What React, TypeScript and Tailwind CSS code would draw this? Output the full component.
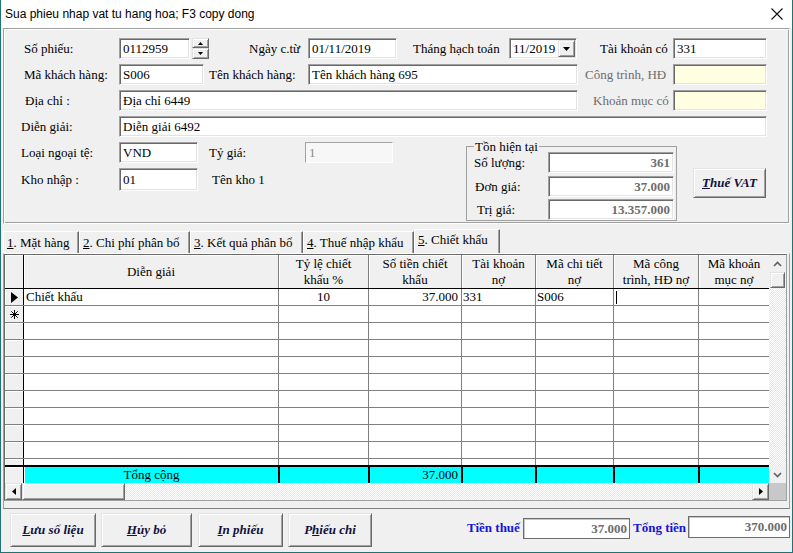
import React from "react";

const SUNKEN =
  "border border-t-[#a0a0a0] border-l-[#a0a0a0] border-b-white border-r-white shadow-[inset_1px_1px_0_#696969,inset_-1px_-1px_0_#e3e3e3]";
const RAISED =
  "border border-t-[#e3e3e3] border-l-[#e3e3e3] border-b-[#696969] border-r-[#696969] shadow-[inset_1px_1px_0_#ffffff,inset_-1px_-1px_0_#a0a0a0]";
const DITHER =
  "bg-[image:repeating-conic-gradient(#e6e6e6_0_25%,#ffffff_0_50%)] bg-[length:2px_2px]";

function Box({ className, children }: { className: string; children?: React.ReactNode }) {
  return (
    <div className={`${SUNKEN} flex items-center px-[3px] whitespace-nowrap overflow-hidden shrink-0 ${className}`}>
      {children}
    </div>
  );
}

const TriUp = () => (
  <svg width="5" height="3" viewBox="0 0 5 3">
    <path d="M2.5 0L5 3H0z" fill="#000" />
  </svg>
);
const TriDown = ({ w = 5, h = 3 }: { w?: number; h?: number }) => (
  <svg width={w} height={h} viewBox={`0 0 ${w} ${h}`}>
    <path d={`M0 0H${w}L${w / 2} ${h}z`} fill="#000" />
  </svg>
);
const TriLeft = () => (
  <svg width="4" height="7" viewBox="0 0 4 7">
    <path d="M4 0V7L0 3.5z" fill="#000" />
  </svg>
);
const TriRight = () => (
  <svg width="4" height="7" viewBox="0 0 4 7">
    <path d="M0 0V7L4 3.5z" fill="#000" />
  </svg>
);
const ChevUp = () => (
  <svg width="9" height="6" viewBox="0 0 9 6">
    <path d="M1 5L4.5 1.5L8 5" stroke="#606060" strokeWidth="1.6" fill="none" />
  </svg>
);
const ChevDown = () => (
  <svg width="9" height="6" viewBox="0 0 9 6">
    <path d="M1 1L4.5 4.5L8 1" stroke="#606060" strokeWidth="1.6" fill="none" />
  </svg>
);

const COLS: { w: string; t: string[]; tw: string }[] = [
  { w: "w-[255px] border-r", tw: "w-[255px] border-r-2", t: ["Diễn giải"] },
  { w: "w-[90px] border-r", tw: "w-[90px] border-r-2", t: ["Tỷ lệ chiết", "khấu %"] },
  { w: "w-[93px] border-r", tw: "w-[93px] border-r-2", t: ["Số tiền chiết", "khấu"] },
  { w: "w-[74px] border-r", tw: "w-[74px] border-r-2", t: ["Tài khoản", "nợ"] },
  { w: "w-[78px] border-r", tw: "w-[78px] border-r-2", t: ["Mã chi tiết", "nợ"] },
  { w: "w-[85px] border-r", tw: "w-[85px] border-r-2", t: ["Mã công", "trình, HĐ nợ"] },
  { w: "w-[70px]", tw: "w-[70px]", t: ["Mã khoản", "mục nợ"] },
];

function Tab({ w, num, rest, active }: { w: string; num: string; rest: string; active?: boolean }) {
  return (
    <div
      className={`${w} ${
        active ? "h-[24px] relative z-10 pb-[3px]" : "h-[22px]"
      } shrink-0 flex items-center pl-[3px] bg-[#f0f0f0] border-t border-l border-r border-t-white border-l-white border-r-[#696969] shadow-[inset_-1px_0_0_#a0a0a0] whitespace-nowrap`}
    >
      <span className="underline">{num}</span>
      <span>{rest}</span>
    </div>
  );
}

function RowHdr({ children }: { children?: React.ReactNode }) {
  return (
    <div className="w-[19px] shrink-0 h-full bg-[#f0f0f0] border-r border-r-black shadow-[inset_1px_1px_0_#ffffff] flex items-center justify-center">
      {children}
    </div>
  );
}

function Btn({ className, children }: { className: string; children: React.ReactNode }) {
  return (
    <div
      className={`${RAISED} ${className} h-[34px] shrink-0 bg-[#f0f0f0] flex items-center justify-center font-bold italic text-[#101040] text-[13px]`}
    >
      {children}
    </div>
  );
}

export default function App() {
  const emptyRows = Array.from({ length: 8 });
  return (
    <div className="w-[793px] h-[553px] bg-[#f0f0f0] border-l border-r border-b border-[#217373] flex flex-col overflow-hidden font-[family-name:Liberation_Serif,Times_New_Roman,serif] text-[13px] text-black leading-[16px]">
      {/* Title bar */}
      <div className="h-[28px] shrink-0 bg-white flex items-center justify-between pl-[4px] pr-[9px]">
        <span className="font-[family-name:Liberation_Sans,Arial,sans-serif] text-[12px] text-black">
          Sua phieu nhap vat tu hang hoa; F3 copy dong
        </span>
        <svg width="12" height="12" viewBox="0 0 12 12">
          <path d="M0.5 0.5L11.5 11.5M11.5 0.5L0.5 11.5" stroke="#111" strokeWidth="1.1" />
        </svg>
      </div>

      {/* Top panel */}
      <div className="ml-[2px] w-[787px] h-[196px] shrink-0 border border-t-[#a0a0a0] border-l-[#a0a0a0] border-b-white border-r-white shadow-[inset_1px_1px_0_#ffffff,inset_-1px_-1px_0_#a0a0a0] pt-[9px]">
        {/* Row 1 */}
        <div className="flex items-center h-[21px]">
          <div className="w-[115px] pl-[20px] shrink-0">Số phiếu:</div>
          <Box className="w-[71px] h-[21px] bg-white">0112959</Box>
          <div className="ml-[2px] w-[17px] h-[21px] flex flex-col shrink-0">
            <div className={`${RAISED} h-[10px] bg-[#f0f0f0] flex items-center justify-center`}>
              <TriUp />
            </div>
            <div className={`${RAISED} h-[11px] bg-[#f0f0f0] flex items-center justify-center`}>
              <TriDown />
            </div>
          </div>
          <div className="w-[99px] pl-[40px] shrink-0">Ngày c.từ</div>
          <Box className="w-[89px] h-[21px] bg-white">01/11/2019</Box>
          <div className="w-[112px] pl-[16px] shrink-0">Tháng hạch toán</div>
          <div className={`${SUNKEN} w-[68px] h-[21px] bg-white flex items-center shrink-0 pl-[3px] pr-[1px] py-[1px]`}>
            <span className="flex-1">11/2019</span>
            <div className={`${RAISED} w-[17px] h-[17px] bg-[#f0f0f0] flex items-center justify-center`}>
              <TriDown w={7} h={4} />
            </div>
          </div>
          <div className="w-[96px] pl-[23px] shrink-0">Tài khoản có</div>
          <Box className="w-[94px] h-[21px] bg-white">331</Box>
        </div>

        {/* Row 2 */}
        <div className="flex items-center h-[21px] mt-[5px]">
          <div className="w-[115px] pl-[20px] shrink-0">Mã khách hàng:</div>
          <Box className="w-[85px] h-[21px] bg-white">S006</Box>
          <div className="w-[104px] pl-[5px] shrink-0">Tên khách hàng:</div>
          <Box className="w-[270px] h-[21px] bg-white">Tên khách hàng 695</Box>
          <div className="w-[95px] pl-[7px] shrink-0 text-[#6d6d6d]">Công trình, HĐ</div>
          <Box className="w-[94px] h-[21px] bg-[#ffffe1]">{""}</Box>
        </div>

        {/* Row 3 */}
        <div className="flex items-center h-[21px] mt-[5px]">
          <div className="w-[115px] pl-[21px] shrink-0">Địa chỉ :</div>
          <Box className="w-[459px] h-[21px] bg-white">Địa chỉ 6449</Box>
          <div className="w-[95px] pl-[15px] shrink-0 text-[#6d6d6d]">Khoản mục có</div>
          <Box className="w-[94px] h-[21px] bg-[#ffffe1]">{""}</Box>
        </div>

        {/* Row 4 */}
        <div className="flex items-center h-[21px] mt-[5px]">
          <div className="w-[115px] pl-[17px] shrink-0">Diễn giải:</div>
          <Box className="w-[648px] h-[21px] bg-white">Diễn giải 6492</Box>
        </div>

        {/* Lower section */}
        <div className="flex items-start mt-[4px]">
          <div className="w-[462px] shrink-0">
            <div className="flex items-center h-[21px] mt-[1px]">
              <div className="w-[115px] pl-[17px] shrink-0">Loại ngoại tệ:</div>
              <Box className="w-[79px] h-[21px] bg-white">VND</Box>
              <div className="w-[107px] pl-[11px] shrink-0">Tỷ giá:</div>
              <div className="w-[88px] h-[21px] shrink-0 border border-t-[#a0a0a0] border-l-[#a0a0a0] border-b-white border-r-white bg-[#f7f7f7] text-[#8a8a8a] flex items-center px-[3px]">
                1
              </div>
            </div>
            <div className="flex items-center h-[23px] mt-[5px]">
              <div className="w-[115px] pl-[17px] shrink-0">Kho nhập :</div>
              <Box className="w-[79px] h-[23px] bg-white">01</Box>
              <div className="pl-[14px] shrink-0">Tên kho 1</div>
            </div>
          </div>

          <fieldset className="w-[211px] shrink-0 border border-[#a0a0a0] pl-[7px] pr-[2px] pb-0">
            <legend className="px-[1px] leading-[11px]">Tồn hiện tại</legend>
            <div className="flex items-center h-[21px]">
              <div className="w-[74px] shrink-0">Số lượng:</div>
              <Box className="w-[126px] h-[21px] bg-white justify-end font-bold text-[#6d6d6d]">361</Box>
            </div>
            <div className="flex items-center h-[21px] mt-[3px]">
              <div className="w-[74px] pl-[1px] shrink-0">Đơn giá:</div>
              <Box className="w-[126px] h-[21px] bg-white justify-end font-bold text-[#6d6d6d]">37.000</Box>
            </div>
            <div className="flex items-center h-[21px] mt-[2px]">
              <div className="w-[74px] pl-[3px] shrink-0">Trị giá:</div>
              <Box className="w-[126px] h-[21px] bg-white justify-end font-bold text-[#6d6d6d]">13.357.000</Box>
            </div>
          </fieldset>

          <div
            className={`${RAISED} ml-[16px] mt-[27px] w-[73px] h-[30px] shrink-0 bg-[#f0f0f0] flex items-center justify-center font-bold italic text-[#101040]`}
          >
            <span className="underline">T</span>huế VAT
          </div>
        </div>
      </div>

      {/* Tabs */}
      <div className="flex items-end h-[24px] mt-[5px] ml-[2px] shrink-0">
        <Tab w="w-[76px]" num="1" rest=". Mặt hàng" />
        <Tab w="w-[111px]" num="2" rest=". Chi phí phân bổ" />
        <Tab w="w-[113px]" num="3" rest=". Kết quả phân bổ" />
        <Tab w="w-[111px]" num="4" rest=". Thuế nhập khẩu" />
        <Tab w="w-[86px]" num="5" rest=". Chiết khấu" active />
      </div>

      {/* Tab page */}
      <div className="ml-[2px] w-[787px] h-[256px] shrink-0 border border-t-white border-l-[#a0a0a0] border-r-[#a0a0a0] border-b-[#808080] pb-[8px]">
        <div className="w-[783px] h-[247px] border border-t-[#696969] border-l-[#696969] border-r-[#a0a0a0] border-b-[#a0a0a0] flex flex-col">
          <div className="flex h-[228px] shrink-0">
            {/* Table */}
            <div className="w-[764px] shrink-0 flex flex-col bg-white overflow-hidden">
              {/* Header */}
              <div className="flex h-[34px] shrink-0 border-b border-black bg-[#f0f0f0]">
                <RowHdr />
                {COLS.map((c, i) => (
                  <div
                    key={i}
                    className={`${c.w} shrink-0 border-[#808080] shadow-[inset_1px_1px_0_#ffffff] flex flex-col items-center justify-center text-center leading-[16px]`}
                  >
                    {c.t.map((l, j) => (
                      <span key={j} className="whitespace-nowrap">
                        {l}
                      </span>
                    ))}
                  </div>
                ))}
              </div>

              {/* Data row */}
              <div className="flex h-[17px] shrink-0 border-b border-[#808080]">
                <RowHdr>
                  <svg width="7" height="11" viewBox="0 0 7 11">
                    <path d="M0 0L7 5.5L0 11z" fill="#000" />
                  </svg>
                </RowHdr>
                <div className={`${COLS[0].w} shrink-0 border-[#808080] pl-[2px] flex items-center`}>Chiết khấu</div>
                <div className={`${COLS[1].w} shrink-0 border-[#808080] flex items-center justify-center`}>10</div>
                <div className={`${COLS[2].w} shrink-0 border-[#808080] flex items-center justify-end pr-[3px]`}>37.000</div>
                <div className={`${COLS[3].w} shrink-0 border-[#808080] flex items-center pl-[1px]`}>331</div>
                <div className={`${COLS[4].w} shrink-0 border-[#808080] flex items-center pl-[1px]`}>S006</div>
                <div className={`${COLS[5].w} shrink-0 border-[#808080] flex items-center pl-[2px]`}>
                  <div className="w-px h-[13px] bg-black" />
                </div>
                <div className={`${COLS[6].w} shrink-0`} />
              </div>

              {/* New row */}
              <div className="flex h-[17px] shrink-0 border-b border-[#808080]">
                <RowHdr>
                  <svg width="9" height="9" viewBox="0 0 9 9">
                    <path d="M4.5 0V9M0 4.5H9M1.3 1.3L7.7 7.7M7.7 1.3L1.3 7.7" stroke="#000" strokeWidth="1" />
                  </svg>
                </RowHdr>
                {COLS.map((c, i) => (
                  <div key={i} className={`${c.w} shrink-0 border-[#808080]`} />
                ))}
              </div>

              {emptyRows.map((_, r) => (
                <div key={r} className="flex h-[17px] shrink-0 border-b border-[#808080]">
                  <RowHdr />
                  {COLS.map((c, i) => (
                    <div key={i} className={`${c.w} shrink-0 border-[#808080]`} />
                  ))}
                </div>
              ))}

              {/* Partial row */}
              <div className="flex h-[6px] shrink-0">
                <RowHdr />
                {COLS.map((c, i) => (
                  <div key={i} className={`${c.w} shrink-0 border-[#808080]`} />
                ))}
              </div>

              {/* Total row */}
              <div className="flex h-[18px] shrink-0 border-t-2 border-black">
                <RowHdr />
                {COLS.map((c, i) => (
                  <div
                    key={i}
                    className={`${c.tw} shrink-0 border-black bg-[#00ffff] flex items-center ${
                      i === 0 ? "justify-center ml-[1px]" : i === 2 ? "justify-end pr-[3px]" : ""
                    }`}
                  >
                    {i === 0 ? "Tổng cộng" : i === 2 ? "37.000" : ""}
                  </div>
                ))}
              </div>
            </div>

            {/* Vertical scrollbar */}
            <div className={`w-[17px] shrink-0 flex flex-col ${DITHER}`}>
              <div className="h-[17px] flex items-center justify-center bg-[#f0f0f0]">
                <ChevUp />
              </div>
              <div className={`${RAISED} h-[16px] mx-[1px] bg-[#f0f0f0]`} />
              <div className="flex-1" />
              <div className="h-[17px] flex items-center justify-center bg-[#f0f0f0]">
                <ChevDown />
              </div>
            </div>
          </div>

          {/* Horizontal scrollbar */}
          <div className="flex h-[17px] shrink-0">
            <div className={`${RAISED} w-[17px] bg-[#f0f0f0] flex items-center justify-center`}>
              <TriLeft />
            </div>
            <div className={`${RAISED} w-[103px] bg-[#f0f0f0]`} />
            <div className={`flex-1 ${DITHER}`} />
            <div className={`${RAISED} w-[17px] bg-[#f0f0f0] flex items-center justify-center`}>
              <TriRight />
            </div>
            <div className="w-[17px] bg-[#c8c8c8]" />
          </div>
        </div>
      </div>

      {/* Bottom bar */}
      <div className="flex items-start mt-[4px] shrink-0">
        <Btn className="ml-[9px] w-[86px]">
          <span className="underline">L</span>ưu số liệu
        </Btn>
        <Btn className="ml-[5px] w-[91px]">
          <span className="underline">H</span>ủy bỏ
        </Btn>
        <Btn className="ml-[6px] w-[85px]">
          <span className="underline">I</span>n phiếu
        </Btn>
        <Btn className="ml-[5px] w-[84px]">
          P<span className="underline">h</span>iếu chi
        </Btn>
        <div className="ml-[95px] mt-[7px] w-[56px] shrink-0 font-bold text-[#1414dc] whitespace-nowrap">Tiền thuế</div>
        <div className="mt-[5px] w-[107px] h-[21px] shrink-0 border border-[#6d6d6d] shadow-[inset_1px_1px_0_#c8c8c8] bg-white flex items-center justify-end pr-[2px] font-bold text-[#6d6d6d]">
          37.000
        </div>
        <div className="ml-[3px] mt-[7px] w-[55px] shrink-0 font-bold text-[#1414dc] whitespace-nowrap">Tổng tiền</div>
        <div className="mt-[3px] w-[102px] h-[22px] shrink-0 border border-[#6d6d6d] shadow-[inset_1px_1px_0_#c8c8c8] bg-white flex items-center justify-end pr-[2px] font-bold text-[#6d6d6d]">
          370.000
        </div>
      </div>
    </div>
  );
}
